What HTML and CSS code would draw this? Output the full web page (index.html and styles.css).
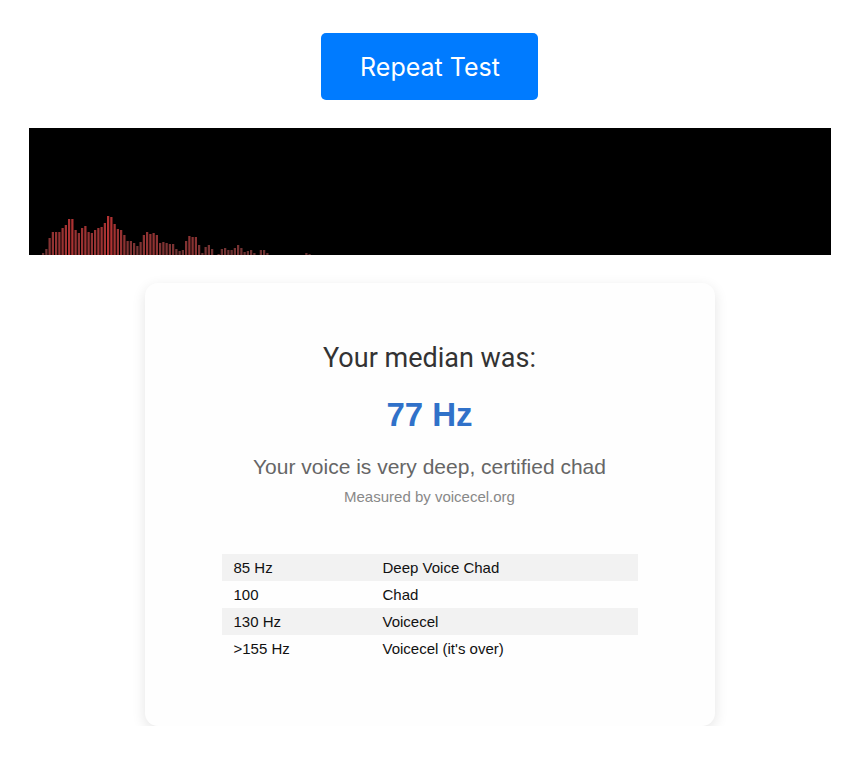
FILE: index.html
```html
<!DOCTYPE html>
<html>
<head>
<meta charset="utf-8">
<link rel="stylesheet" href="styles.css">
</head>
<body>
<div class="page">
  <button class="btn">Repeat Test</button>
  <div class="viz">
    <svg width="802" height="127" viewBox="0 0 802 127">
      <rect x="13" y="125" width="2.25" height="2" fill="rgb(104,50,50)"/>
      <rect x="16.25" y="121" width="2.25" height="6" fill="rgb(112,50,50)"/>
      <rect x="19.5" y="110" width="2.25" height="17" fill="rgb(134,50,50)"/>
      <rect x="22.75" y="104" width="2.25" height="23" fill="rgb(146,50,50)"/>
      <rect x="26" y="104" width="2.25" height="23" fill="rgb(146,50,50)"/>
      <rect x="29.25" y="104" width="2.25" height="23" fill="rgb(146,50,50)"/>
      <rect x="32.5" y="100" width="2.25" height="27" fill="rgb(154,50,50)"/>
      <rect x="35.75" y="97" width="2.25" height="30" fill="rgb(160,50,50)"/>
      <rect x="39" y="91" width="2.25" height="36" fill="rgb(172,50,50)"/>
      <rect x="42.25" y="91" width="2.25" height="36" fill="rgb(172,50,50)"/>
      <rect x="45.5" y="102" width="2.25" height="25" fill="rgb(150,50,50)"/>
      <rect x="48.75" y="105" width="2.25" height="22" fill="rgb(144,50,50)"/>
      <rect x="52" y="100" width="2.25" height="27" fill="rgb(154,50,50)"/>
      <rect x="55.25" y="98" width="2.25" height="29" fill="rgb(158,50,50)"/>
      <rect x="58.5" y="104" width="2.25" height="23" fill="rgb(146,50,50)"/>
      <rect x="61.75" y="105" width="2.25" height="22" fill="rgb(144,50,50)"/>
      <rect x="65" y="102" width="2.25" height="25" fill="rgb(150,50,50)"/>
      <rect x="68.25" y="100" width="2.25" height="27" fill="rgb(154,50,50)"/>
      <rect x="71.5" y="99" width="2.25" height="28" fill="rgb(156,50,50)"/>
      <rect x="74.75" y="95" width="2.25" height="32" fill="rgb(164,50,50)"/>
      <rect x="78" y="88" width="2.25" height="39" fill="rgb(178,50,50)"/>
      <rect x="81.25" y="89" width="2.25" height="38" fill="rgb(176,50,50)"/>
      <rect x="84.5" y="96" width="2.25" height="31" fill="rgb(162,50,50)"/>
      <rect x="87.75" y="101" width="2.25" height="26" fill="rgb(152,50,50)"/>
      <rect x="91" y="102" width="2.25" height="25" fill="rgb(150,50,50)"/>
      <rect x="94.25" y="107" width="2.25" height="20" fill="rgb(140,50,50)"/>
      <rect x="97.5" y="113" width="2.25" height="14" fill="rgb(128,50,50)"/>
      <rect x="100.75" y="113" width="2.25" height="14" fill="rgb(128,50,50)"/>
      <rect x="104" y="115" width="2.25" height="12" fill="rgb(124,50,50)"/>
      <rect x="107.25" y="118" width="2.25" height="9" fill="rgb(118,50,50)"/>
      <rect x="110.5" y="114" width="2.25" height="13" fill="rgb(126,50,50)"/>
      <rect x="113.75" y="107" width="2.25" height="20" fill="rgb(140,50,50)"/>
      <rect x="117" y="104" width="2.25" height="23" fill="rgb(146,50,50)"/>
      <rect x="120.25" y="106" width="2.25" height="21" fill="rgb(142,50,50)"/>
      <rect x="123.5" y="105" width="2.25" height="22" fill="rgb(144,50,50)"/>
      <rect x="126.75" y="107" width="2.25" height="20" fill="rgb(140,50,50)"/>
      <rect x="130" y="115" width="2.25" height="12" fill="rgb(124,50,50)"/>
      <rect x="133.25" y="114" width="2.25" height="13" fill="rgb(126,50,50)"/>
      <rect x="136.5" y="115" width="2.25" height="12" fill="rgb(124,50,50)"/>
      <rect x="139.75" y="116" width="2.25" height="11" fill="rgb(122,50,50)"/>
      <rect x="143" y="116" width="2.25" height="11" fill="rgb(122,50,50)"/>
      <rect x="146.25" y="121" width="2.25" height="6" fill="rgb(112,50,50)"/>
      <rect x="149.5" y="123" width="2.25" height="4" fill="rgb(108,50,50)"/>
      <rect x="152.75" y="122" width="2.25" height="5" fill="rgb(110,50,50)"/>
      <rect x="156" y="113" width="2.25" height="14" fill="rgb(128,50,50)"/>
      <rect x="159.25" y="108" width="2.25" height="19" fill="rgb(138,50,50)"/>
      <rect x="162.5" y="109" width="2.25" height="18" fill="rgb(136,50,50)"/>
      <rect x="165.75" y="109" width="2.25" height="18" fill="rgb(136,50,50)"/>
      <rect x="169" y="117" width="2.25" height="10" fill="rgb(120,50,50)"/>
      <rect x="172.25" y="125" width="2.25" height="2" fill="rgb(104,50,50)"/>
      <rect x="175.5" y="119" width="2.25" height="8" fill="rgb(116,50,50)"/>
      <rect x="178.75" y="117" width="2.25" height="10" fill="rgb(120,50,50)"/>
      <rect x="182" y="121" width="2.25" height="6" fill="rgb(112,50,50)"/>
      <rect x="188.5" y="126" width="2.25" height="1" fill="rgb(102,50,50)"/>
      <rect x="191.75" y="121" width="2.25" height="6" fill="rgb(112,50,50)"/>
      <rect x="195" y="120" width="2.25" height="7" fill="rgb(114,50,50)"/>
      <rect x="198.25" y="122" width="2.25" height="5" fill="rgb(110,50,50)"/>
      <rect x="201.5" y="122" width="2.25" height="5" fill="rgb(110,50,50)"/>
      <rect x="204.75" y="120" width="2.25" height="7" fill="rgb(114,50,50)"/>
      <rect x="208" y="117" width="2.25" height="10" fill="rgb(120,50,50)"/>
      <rect x="211.25" y="120" width="2.25" height="7" fill="rgb(114,50,50)"/>
      <rect x="214.5" y="124" width="2.25" height="3" fill="rgb(106,50,50)"/>
      <rect x="217.75" y="123" width="2.25" height="4" fill="rgb(108,50,50)"/>
      <rect x="221" y="122" width="2.25" height="5" fill="rgb(110,50,50)"/>
      <rect x="224.25" y="125" width="2.25" height="2" fill="rgb(104,50,50)"/>
      <rect x="230.75" y="122" width="2.25" height="5" fill="rgb(110,50,50)"/>
      <rect x="234" y="122" width="2.25" height="5" fill="rgb(110,50,50)"/>
      <rect x="237.25" y="125" width="2.25" height="2" fill="rgb(104,50,50)"/>
      <rect x="276.25" y="125" width="2.25" height="2" fill="rgb(104,50,50)"/>
      <rect x="279.5" y="126" width="2.25" height="1" fill="rgb(102,50,50)"/>
    </svg>
  </div>
  <div class="card">
    <h2 class="label">Your median was:</h2>
    <div class="value">77 Hz</div>
    <p class="verdict">Your voice is very deep, certified chad</p>
    <p class="credit">Measured by voicecel.org</p>
    <table class="scale">
      <tr><td class="hz">85 Hz</td><td>Deep Voice Chad</td></tr>
      <tr><td class="hz">100</td><td>Chad</td></tr>
      <tr><td class="hz">130 Hz</td><td>Voicecel</td></tr>
      <tr><td class="hz">&gt;155 Hz</td><td>Voicecel (it's over)</td></tr>
    </table>
  </div>
</div>
</body>
</html>
```

FILE: styles.css
```css
html, body {
  margin: 0;
  padding: 0;
  background: #ffffff;
}

.page {
  width: 859px;
  display: flex;
  flex-direction: column;
  align-items: center;
  padding-top: 33px;
  font-family: "Liberation Sans", Arial, sans-serif;
}

.btn {
  width: 217px;
  height: 67px;
  border: none;
  border-radius: 5px;
  background: #007bff;
  color: #ffffff;
  font-family: Inter, "Open Sans", sans-serif;
  font-size: 25px;
  font-weight: 400;
  padding: 0 0 0 1px;
  line-height: 30px;
}

.viz {
  margin-top: 28px;
  width: 802px;
  height: 127px;
  background: #000000;
  line-height: 0;
}

.viz svg {
  display: block;
}

.card {
  margin-top: 28px;
  width: 570px;
  box-sizing: border-box;
  background: #fefefe;
  border-radius: 13px;
  box-shadow: 0 4px 14px rgba(0, 0, 0, 0.11);
  padding: 60px 0 64px;
  display: flex;
  flex-direction: column;
  align-items: center;
}

.label {
  margin: 0;
  font-family: Roboto, "Liberation Sans", sans-serif;
  font-weight: 400;
  font-size: 27px;
  line-height: 30px;
  color: #333333;
}

.value {
  margin-top: 23px;
  font-size: 33px;
  line-height: 37px;
  font-weight: 700;
  color: #3071c9;
}

.verdict {
  margin: 22px 0 0;
  font-size: 21px;
  line-height: 23px;
  color: #666666;
}

.credit {
  margin: 11px 0 0;
  font-size: 15px;
  line-height: 16px;
  color: #888888;
}

.scale {
  margin-top: 49px;
  width: 416px;
  border-collapse: collapse;
  font-size: 15px;
  color: #111111;
}

.scale td {
  padding: 5px 12px;
  line-height: 17px;
  text-align: left;
}

.scale td.hz {
  width: 125px;
}

.scale tr:nth-child(odd) {
  background: #f2f2f2;
}
```
